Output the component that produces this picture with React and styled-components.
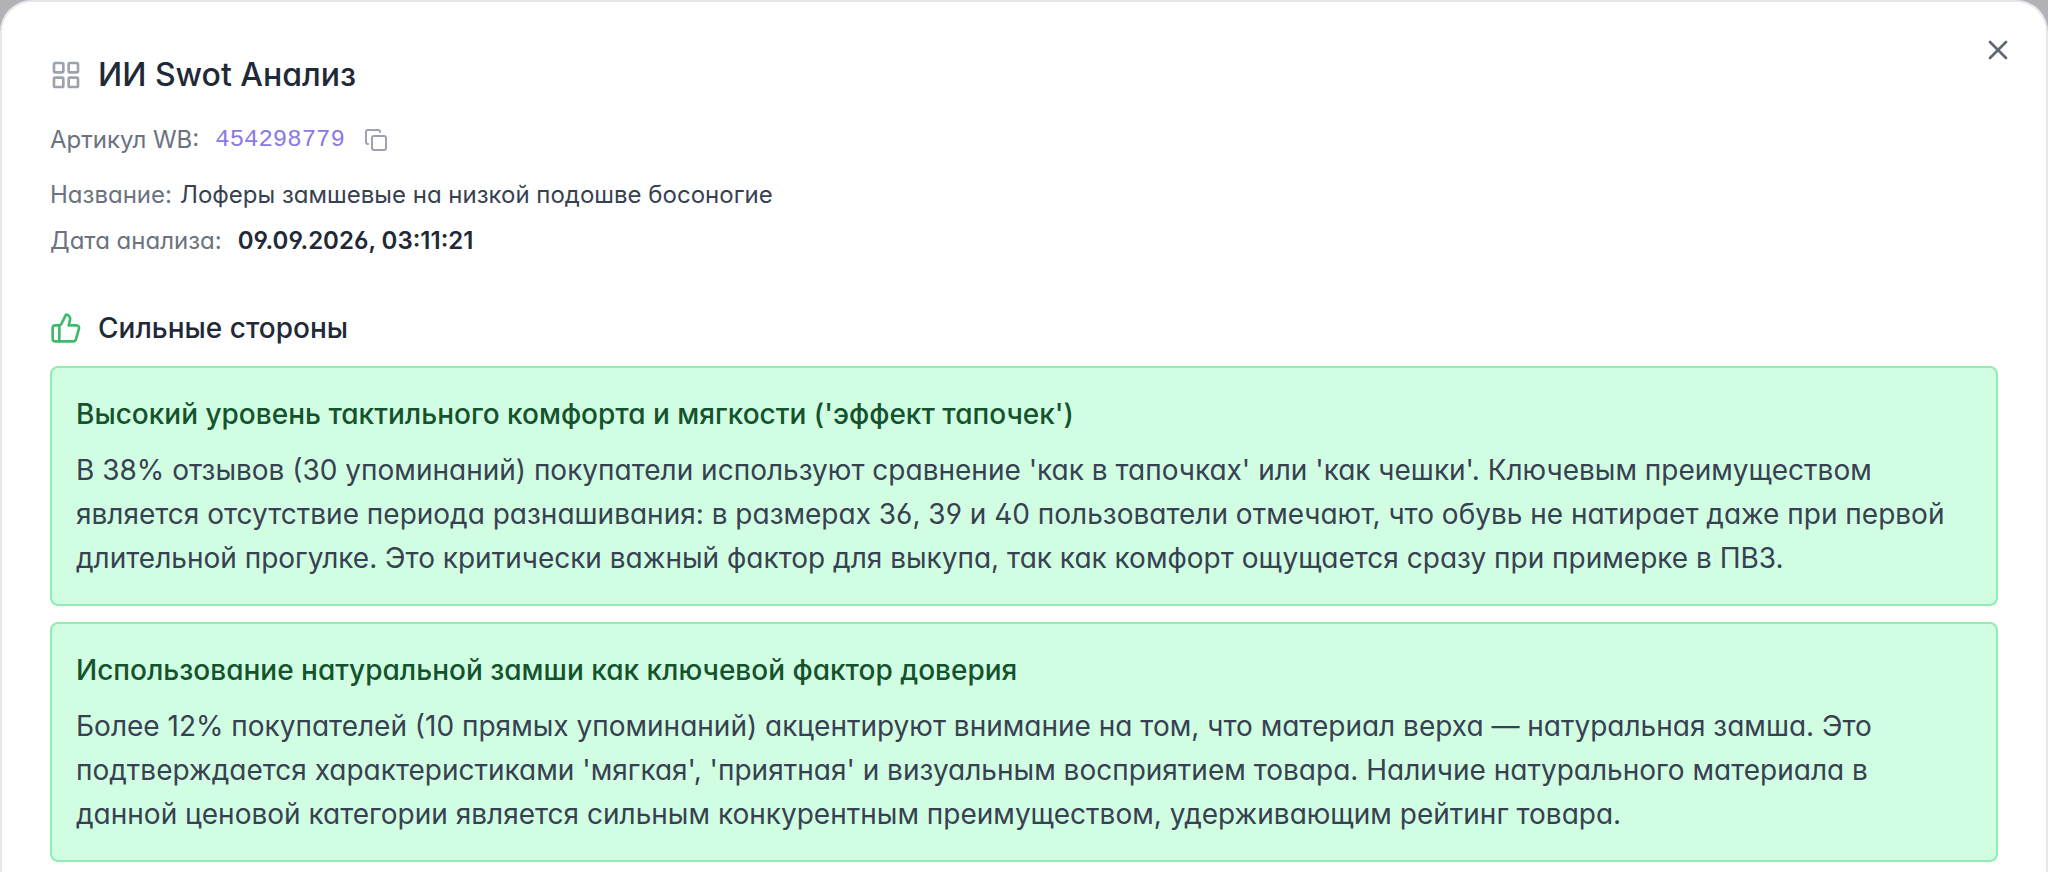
import React from "react";
import styled, { createGlobalStyle } from "styled-components";
import { X, ThumbsUp, Copy, LayoutGrid } from "lucide-react";

const GlobalStyle = createGlobalStyle`
  *, *::before, *::after { box-sizing: border-box; }
  body {
    margin: 0;
    background: #b2b2b6;
    font-family: Inter, "Liberation Sans", sans-serif;
    font-feature-settings: "cv02", "cv03", "cv04", "cv11";
    color: #1f2937;
  }
  h2, h3, h4, p, dl, dd { margin: 0; }
`;

const Dialog = styled.main`
  position: relative;
  height: 100vh;
  overflow: hidden;
  padding: 48px;
  background: #fff;
  border: 2px solid #e5e7eb;
  border-bottom: 0;
  border-radius: 32px 32px 0 0;
`;

const IconButton = styled.button`
  display: inline-flex;
  padding: 0;
  border: 0;
  background: none;
  color: ${(p) => p.$color};
  cursor: pointer;
`;

const CloseButton = styled(IconButton)`
  position: absolute;
  top: 32px;
  right: 32px;
`;

const Heading = styled.h2`
  display: flex;
  align-items: center;
  gap: 16px;
  font-size: 32px;
  line-height: 50px;
  font-weight: 500;
  svg { color: #9ca3af; }
`;

const Details = styled.dl`
  display: flex;
  flex-direction: column;
  gap: 12px;
  margin-top: 22px;
  font-size: 24px;
  line-height: 34px;
`;

const Detail = styled.div`
  display: flex;
  align-items: center;
  gap: ${(p) => p.$gap}px;
`;

const ArticleDetail = styled(Detail)`
  padding: 1px 0;
  margin-bottom: 8px;
`;

const Term = styled.dt`
  color: #6b7280;
`;

const Value = styled.dd`
  display: flex;
  align-items: center;
  gap: 19px;
  color: ${(p) => (p.$strong ? "#1f2937" : "#374151")};
  font-weight: ${(p) => (p.$strong ? 600 : 400)};
`;

const ArticleLink = styled.a`
  color: #8b78e6;
  font-family: "Liberation Mono", monospace;
  text-decoration: none;
`;

const Section = styled.section`
  margin-top: 48px;
`;

const SectionTitle = styled.h3`
  display: flex;
  align-items: center;
  gap: 16px;
  font-size: 28px;
  line-height: 44px;
  font-weight: 500;
  svg { color: #3dba6c; }
`;

const Cards = styled.div`
  display: flex;
  flex-direction: column;
  gap: 16px;
  margin-top: 16px;
`;

const Card = styled.article`
  padding: 24px;
  background: #d1fee2;
  border: 2px solid #92edb3;
  border-radius: 8px;
`;

const CardTitle = styled.h4`
  margin-bottom: 12px;
  color: #14532d;
  font-size: 28px;
  line-height: 44px;
  font-weight: 500;
`;

const CardText = styled.p`
  color: #374151;
  font-size: 28px;
  line-height: 44px;
`;

const strengths = [
  {
    title: "Высокий уровень тактильного комфорта и мягкости ('эффект тапочек')",
    text: "В 38% отзывов (30 упоминаний) покупатели используют сравнение 'как в тапочках' или 'как чешки'. Ключевым преимуществом является отсутствие периода разнашивания: в размерах 36, 39 и 40 пользователи отмечают, что обувь не натирает даже при первой длительной прогулке. Это критически важный фактор для выкупа, так как комфорт ощущается сразу при примерке в ПВЗ.",
  },
  {
    title: "Использование натуральной замши как ключевой фактор доверия",
    text: "Более 12% покупателей (10 прямых упоминаний) акцентируют внимание на том, что материал верха — натуральная замша. Это подтверждается характеристиками 'мягкая', 'приятная' и визуальным восприятием товара. Наличие натурального материала в данной ценовой категории является сильным конкурентным преимуществом, удерживающим рейтинг товара.",
  },
];

export default function App() {
  return (
    <>
      <GlobalStyle />
      <Dialog>
        <CloseButton type="button" aria-label="Закрыть" $color="#616773">
          <X size={32} />
        </CloseButton>
        <Heading>
          <LayoutGrid size={32} />
          ИИ Swot Анализ
        </Heading>
        <Details>
          <ArticleDetail $gap={16}>
            <Term>Артикул WB:</Term>
            <Value>
              <ArticleLink href="#454298779">454298779</ArticleLink>
              <IconButton type="button" aria-label="Копировать" $color="#9ca3af">
                <Copy size={24} />
              </IconButton>
            </Value>
          </ArticleDetail>
          <Detail $gap={8}>
            <Term>Название:</Term>
            <Value>Лоферы замшевые на низкой подошве босоногие</Value>
          </Detail>
          <Detail $gap={16}>
            <Term>Дата анализа:</Term>
            <Value $strong>09.09.2026, 03:11:21</Value>
          </Detail>
        </Details>
        <Section>
          <SectionTitle>
            <ThumbsUp size={32} />
            Сильные стороны
          </SectionTitle>
          <Cards>
            {strengths.map((item) => (
              <Card key={item.title}>
                <CardTitle>{item.title}</CardTitle>
                <CardText>{item.text}</CardText>
              </Card>
            ))}
          </Cards>
        </Section>
      </Dialog>
    </>
  );
}
